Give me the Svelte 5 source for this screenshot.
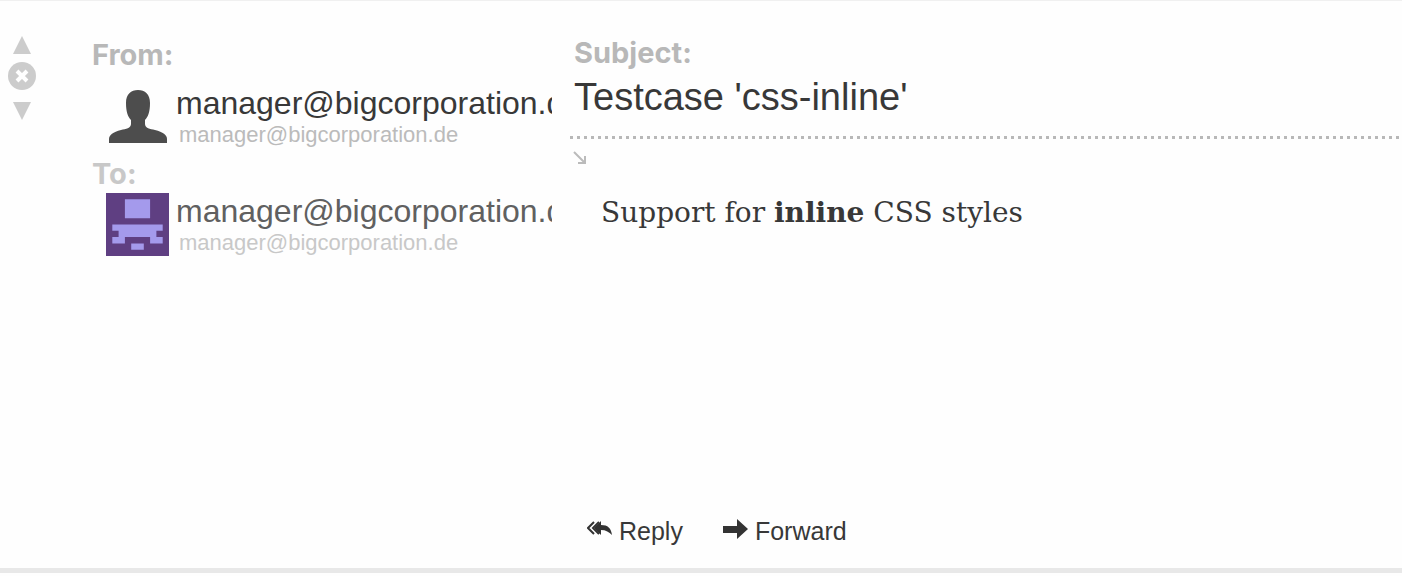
<script>
  const address = 'manager@bigcorporation.de';
</script>

<article class="message">
  <nav class="controls" aria-label="Message navigation">
    <button type="button" aria-label="Previous message">
      <svg width="18" height="18" viewBox="0 0 18 18"><path d="M9 0 18 18H0Z" /></svg>
    </button>
    <button type="button" aria-label="Close message">
      <svg width="28" height="28" viewBox="0 0 28 28">
        <circle cx="14" cy="14" r="14" />
        <path class="cross" d="m9 9 10 10M19 9 9 19" />
      </svg>
    </button>
    <button type="button" class="next" aria-label="Next message">
      <svg width="18" height="18" viewBox="0 0 18 18"><path d="M0 0H18L9 18Z" /></svg>
    </button>
  </nav>

  <section class="people">
    <div class="party">
      <h2>From:</h2>
      <div class="contact">
        <svg class="avatar" viewBox="0 0 63 63" aria-hidden="true">
          <path
            fill="#4d4d4d"
            d="M32 7C39 7 44 11 44 20C44 29 42 34 39 37V41C39 45 44 46 49 47C57 49 61 52 61 56V60H3V56C3 52 7 49 15 47C20 46 25 45 25 41V37C22 34 20 29 20 20C20 11 25 7 32 7Z"
          />
        </svg>
        <div class="identity">
          <div class="name">{address}</div>
          <div class="address">{address}</div>
        </div>
      </div>
    </div>
    <div class="party to">
      <h2>To:</h2>
      <div class="contact">
        <svg class="avatar" viewBox="0 0 10 10" aria-hidden="true">
          <path fill="#5f3f82" d="M0 0H10V10H0Z" />
          <path fill="#a49aec" d="M3 1H7V4H3ZM1 5H9V6H8V7H9V8H7V7H3V8H1V7H2V6H1ZM4 8H6V9H4Z" />
        </svg>
        <div class="identity">
          <div class="name">{address}</div>
          <div class="address">{address}</div>
        </div>
      </div>
    </div>
  </section>

  <section class="content">
    <header>
      <h2>Subject:</h2>
      <h1>Testcase 'css-inline'</h1>
    </header>
    <svg class="corner" width="14" height="14" viewBox="0 0 14 14" aria-hidden="true">
      <path d="m1 1 11 11M12 5V12H5" />
    </svg>
    <p>Support for <strong>inline</strong> CSS styles</p>
    <footer>
      <button type="button">
        <svg width="26" height="24" viewBox="0 0 26 24" aria-hidden="true">
          <path d="M14 2V6C21 6 24 9 25 16C22 13 19 11 14 11V16L7 9Z" />
          <path class="chevrons" d="M7 3 1 9l6 6M12 3 6 9l6 6" />
        </svg>
        Reply
      </button>
      <button type="button">
        <svg width="26" height="24" viewBox="0 0 26 24" aria-hidden="true">
          <path d="M0 7H14V0L25 10 14 20V14H0Z" />
        </svg>
        Forward
      </button>
    </footer>
  </section>
</article>

<style>
  :global(body) {
    margin: 0;
    background: #fefefe;
  }
  .message {
    display: grid;
    grid-template-columns: 74px minmax(200px, 460px) minmax(0, 1fr);
    column-gap: 18px;
    border-top: 1px solid #f0f0f0;
    border-bottom: 5px solid #e8e8e8;
    color: #383838;
    font-family: "Liberation Sans", Arial, sans-serif;
  }
  h1,
  h2,
  p {
    margin: 0;
  }
  button {
    display: flex;
    align-items: center;
    padding: 0;
    border: 0;
    background: none;
    color: inherit;
    font: inherit;
    cursor: pointer;
  }
  svg {
    display: block;
    flex: none;
  }
  .controls {
    display: flex;
    flex-direction: column;
    align-items: center;
    justify-self: start;
    gap: 8px;
    padding: 35px 8px 0;
    fill: #ccc;
  }
  .next {
    padding-top: 4px;
  }
  .cross {
    stroke: #fff;
    stroke-width: 4;
  }
  h2 {
    color: #b8b8b8;
    font: 700 29px/36px Inter, sans-serif;
  }
  .people {
    padding-top: 36px;
  }
  .party {
    height: 119px;
  }
  .contact {
    display: flex;
    gap: 7px;
    padding-left: 14px;
  }
  .avatar {
    width: 63px;
    height: 63px;
    margin-top: 10px;
  }
  .identity {
    flex: 1;
    min-width: 0;
    padding-top: 12px;
  }
  .name {
    overflow: hidden;
    white-space: nowrap;
    font-size: 32px;
    line-height: 36px;
  }
  .address {
    padding-left: 3px;
    color: #bbb;
    font-size: 22px;
    line-height: 28px;
  }
  .to .avatar,
  .to .identity {
    margin-top: 1px;
    padding-top: 0;
  }
  .to .name {
    color: #606060;
  }
  .to h2,
  .to .address {
    color: #c8c8c8;
  }
  .content {
    display: flex;
    flex-direction: column;
    padding-top: 34px;
  }
  header {
    padding: 0 4px 16px;
    background: repeating-linear-gradient(90deg, #b8b8b8 0 3px, transparent 3px 7px) bottom / 100% 3px no-repeat;
  }
  h1 {
    font-size: 38px;
    font-weight: 400;
    line-height: 52px;
  }
  .corner {
    margin: 12px 3px 0;
    fill: none;
    stroke: #bbb;
    stroke-width: 2;
  }
  p {
    min-height: 286px;
    padding: 30px 31px 0;
    font: 28px/36px "DejaVu Serif", serif;
  }
  footer {
    display: flex;
    gap: 40px;
    padding: 35px 17px 22px;
    font-size: 25px;
    line-height: 30px;
  }
  footer button {
    gap: 6px;
  }
  footer svg {
    fill: #333;
  }
  .chevrons {
    fill: none;
    stroke: #333;
    stroke-width: 2;
  }
</style>
